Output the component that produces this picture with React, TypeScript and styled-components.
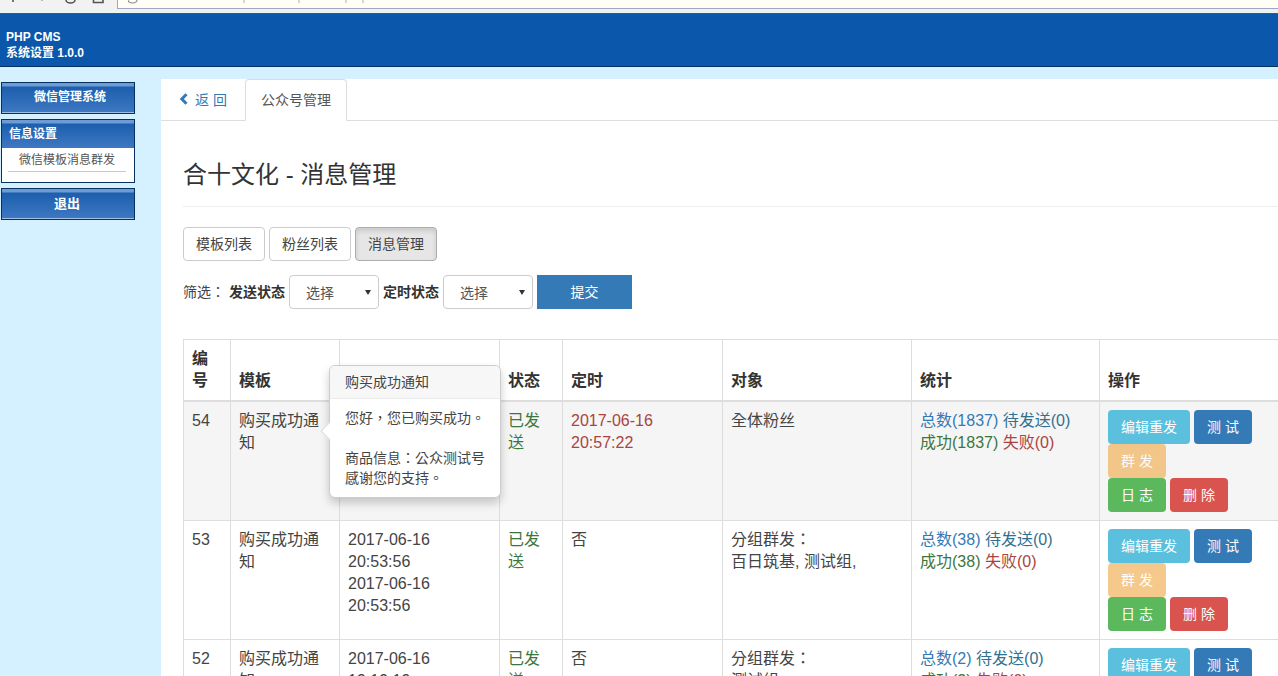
import { createGlobalStyle } from 'styled-components';
import styled from 'styled-components';

const GlobalStyle = createGlobalStyle`
  html, body {
    margin: 0;
    padding: 0;
    height: 100%;
    overflow: hidden;
    background: #d5f1ff;
    font-family: 'Liberation Sans', 'Noto Sans CJK SC', sans-serif;
    color: #333;
    font-size: 14px;
  }
  * { box-sizing: border-box; }
`;

type RowType = {
  id: number;
  timed: 'no' | string[];
  target: string[];
  total: number;
  success: number;
  fail: number;
  wait: number;
  times: string[];
};

const rows: RowType[] = [
  {
    id: 54,
    timed: ['2017-06-16', '20:57:22'],
    target: ['全体粉丝'],
    total: 1837,
    success: 1837,
    fail: 0,
    wait: 0,
    times: [],
  },
  {
    id: 53,
    timed: 'no',
    target: ['分组群发：', '百日筑基, 测试组,'],
    total: 38,
    success: 38,
    fail: 0,
    wait: 0,
    times: ['2017-06-16', '20:53:56', '2017-06-16', '20:53:56'],
  },
  {
    id: 52,
    timed: 'no',
    target: ['分组群发：', '测试组,'],
    total: 2,
    success: 2,
    fail: 0,
    wait: 0,
    times: ['2017-06-16', '19:19:19'],
  },
];

const App = () => {
  return (
    <>
      <GlobalStyle />
      <Chrome>
        <ChromeIcons>
          <svg width="117" height="8" viewBox="0 0 117 8" fill="none" stroke="#555" strokeWidth="1.6">
            <path d="M13 0 V2" />
            <path d="M42 0 V1" stroke="#aaa" />
            <path d="M66 0 A4.5 3 0 0 0 75 0" />
            <path d="M93.5 0 V2.5 H103 V0" />
          </svg>
        </ChromeIcons>
        <UrlBox>
          <svg width="260" height="8" viewBox="0 0 260 8" fill="none" stroke="#888" strokeWidth="1.2">
            <path d="M0 0 A4.5 3 0 0 0 9 0" />
            <path d="M116 0 V3 M171 0 V3 M218 0 V3 M235 0 V3" stroke="#bbb" />
          </svg>
        </UrlBox>
      </Chrome>
      <Header>
        <HeaderLine>PHP CMS</HeaderLine>
        <HeaderLine>系统设置 1.0.0</HeaderLine>
      </Header>
      <Body>
        <Sidebar>
          <SideBlock>
            <SideTitle $center $indent={4}>微信管理系统</SideTitle>
          </SideBlock>
          <SideBlock>
            <SideTitle>信息设置</SideTitle>
            <SideList>
              <SideItem>微信模板消息群发</SideItem>
            </SideList>
          </SideBlock>
          <SideBlock>
            <SideTitle $center $big>退出</SideTitle>
          </SideBlock>
        </Sidebar>
        <Main>
          <Tabs>
            <BackTab>
              <svg width="10" height="12" viewBox="0 0 10 12">
                <path d="M7.5 1.2 L2.8 6 L7.5 10.8" fill="none" stroke="#337ab7" strokeWidth="3" />
              </svg>
              返 回
            </BackTab>
            <ActiveTab>公众号管理</ActiveTab>
          </Tabs>
          <Content>
            <PageTitle>合十文化 - 消息管理</PageTitle>
            <ButtonRow>
              <NavButton>模板列表</NavButton>
              <NavButton>粉丝列表</NavButton>
              <NavButton $active>消息管理</NavButton>
            </ButtonRow>
            <FilterRow>
              <FilterLabel>筛选：</FilterLabel>
              <FilterName>发送状态</FilterName>
              <Select>选择</Select>
              <FilterName>定时状态</FilterName>
              <Select>选择</Select>
              <Submit>提交</Submit>
            </FilterRow>
            <Table>
              <colgroup>
                <col width="47" />
                <col width="109" />
                <col width="160" />
                <col width="63" />
                <col width="160" />
                <col width="189" />
                <col width="188" />
                <col width="200" />
              </colgroup>
              <thead>
                <tr>
                  <Th>编号</Th>
                  <Th>模板</Th>
                  <Th />
                  <Th>状态</Th>
                  <Th>定时</Th>
                  <Th>对象</Th>
                  <Th>统计</Th>
                  <Th>操作</Th>
                </tr>
              </thead>
              <tbody>
                {rows.map((row, i) => (
                  <Tr key={row.id} $striped={i === 0}>
                    <Td>{row.id}</Td>
                    <Td>购买成功通知</Td>
                    <Td>
                      {row.times.map((t, j) => (
                        <div key={j}>{t}</div>
                      ))}
                    </Td>
                    <Td>
                      <Text $color="#3c763d">已发送</Text>
                    </Td>
                    <Td>
                      {row.timed === 'no' ? (
                        '否'
                      ) : (
                        <Text $color="#a94442">
                          {row.timed[0]}
                          <br />
                          {row.timed[1]}
                        </Text>
                      )}
                    </Td>
                    <Td>
                      {row.target.map((t) => (
                        <Target key={t}>{t}</Target>
                      ))}
                    </Td>
                    <Td>
                      <Text $color="#337ab7">总数({row.total})</Text>{' '}
                      <Text $color="#31708f">待发送({row.wait})</Text>
                      <br />
                      <Text $color="#3c763d">成功({row.success})</Text>{' '}
                      <Text $color="#a94442">失败({row.fail})</Text>
                    </Td>
                    <Td>
                      <Actions>
                        <Action $bg="#5bc0de" $w={82}>编辑重发</Action>
                        <Action $bg="#337ab7" $w={58}>测 试</Action>
                        <Action $bg="#f0ad4e" $w={58} $faded>群 发</Action>
                        <Break />
                        <Action $bg="#5cb85c" $w={58}>日 志</Action>
                        <Action $bg="#d9534f" $w={58}>删 除</Action>
                      </Actions>
                    </Td>
                  </Tr>
                ))}
              </tbody>
            </Table>
            <Popover>
              <PopoverTitle>购买成功通知</PopoverTitle>
              <PopoverBody>
                <div>您好，您已购买成功。</div>
                <PopoverGap />
                <div>商品信息：公众测试号</div>
                <div>感谢您的支持。</div>
              </PopoverBody>
              <PopoverArrow />
            </Popover>
          </Content>
        </Main>
      </Body>
    </>
  );
};

const Chrome = styled.div`
  height: 13px;
  background: #eaf5ef;
  display: flex;
  align-items: flex-start;
`;

const ChromeIcons = styled.div`
  width: 117px;
  height: 9px;
  flex: none;
  background: #f2f2f2;
  display: flex;
`;

const UrlBox = styled.div`
  flex: 1;
  height: 9px;
  background: #fffff6;
  border-left: 1px solid #a9a0c8;
  border-bottom: 1px solid #a9a0c8;
  padding-left: 10px;
  display: flex;
`;

const Header = styled.div`
  height: 54px;
  background: #0b57ab;
  border-top: 1px solid #2a5aa0;
  border-bottom: 1px solid #06305f;
  padding-top: 15px;
  padding-left: 6px;
`;

const HeaderLine = styled.div`
  color: #fff;
  font-size: 12px;
  font-weight: bold;
  line-height: 16px;
`;

const Body = styled.div`
  display: flex;
  height: 609px;
`;

const Sidebar = styled.div`
  width: 161px;
  flex: none;
  padding: 15px 26px 0 1px;
  display: flex;
  flex-direction: column;
  gap: 5px;
`;

const SideBlock = styled.div`
  border: 1px solid #06305f;
  background: #fff;
`;

const SideTitle = styled.div<{ $center?: boolean; $indent?: number; $big?: boolean }>`
  height: ${(p) => (p.$center ? '30px' : '28px')};
  line-height: 29px;
  background: linear-gradient(#6f9bd4 0, #6f9bd4 3px, #1c5fae 4px, #3f78c2 100%);
  box-shadow: ${(p) => (p.$center ? 'inset 0 -1px 0 #9fc0e6' : 'none')};
  color: #fff;
  font-size: ${(p) => (p.$big ? '13px' : '12px')};
  font-weight: bold;
  text-align: ${(p) => (p.$center ? 'center' : 'left')};
  padding-left: ${(p) => (p.$center ? `${p.$indent ?? 0}px` : '7px')};
  padding-right: ${(p) => (p.$big ? '2px' : '0')};
`;

const SideList = styled.div`
  padding: 0 8px 10px 6px;
`;

const SideItem = styled.div`
  height: 24px;
  line-height: 25px;
  font-size: 12px;
  color: #555;
  text-align: center;
  border-bottom: 1px solid #c8c8d0;
`;

const Main = styled.div`
  flex: 1;
  min-width: 0;
  margin-top: 12px;
  background: #fff;
`;

const Tabs = styled.div`
  height: 42px;
  border-bottom: 1px solid #ddd;
  display: flex;
`;

const BackTab = styled.div`
  width: 84px;
  height: 41px;
  padding-bottom: 2px;
  color: #337ab7;
  font-size: 14px;
  display: flex;
  align-items: center;
  justify-content: center;
  gap: 6px;
`;

const ActiveTab = styled.div`
  width: 102px;
  height: 42px;
  padding-bottom: 2px;
  border: 1px solid #ddd;
  border-bottom-color: #fff;
  border-radius: 4px 4px 0 0;
  font-size: 14px;
  color: #555;
  display: flex;
  align-items: center;
  justify-content: center;
`;

const Content = styled.div`
  position: relative;
  padding: 37px 0 0 22px;
  width: 1200px;
`;

const PageTitle = styled.h1`
  margin: 0;
  height: 49px;
  border-bottom: 1px solid #eee;
  font-size: 24px;
  font-weight: 400;
  line-height: 33px;
  color: #333;
`;

const ButtonRow = styled.div`
  margin-top: 20px;
  display: flex;
  gap: 4px;
`;

const NavButton = styled.div<{ $active?: boolean }>`
  width: 82px;
  height: 34px;
  line-height: 32px;
  text-align: center;
  font-size: 14px;
  color: #444;
  border: 1px solid ${(p) => (p.$active ? '#adadad' : '#ccc')};
  border-radius: 4px;
  background: ${(p) => (p.$active ? '#e6e6e6' : '#fff')};
  box-shadow: ${(p) => (p.$active ? 'inset 0 3px 5px rgba(0, 0, 0, 0.125)' : 'none')};
`;

const FilterRow = styled.div`
  margin-top: 14px;
  display: flex;
  align-items: center;
  height: 34px;
  font-size: 14px;
`;

const FilterLabel = styled.span`
  margin-right: 4px;
  color: #444;
  margin-top: -2px;
  font-family: 'Liberation Sans', 'Noto Sans CJK TC', sans-serif;
`;

const FilterName = styled.span`
  font-weight: bold;
  margin-right: 4px;
  margin-top: -2px;
`;

const Select = styled.div`
  position: relative;
  width: 90px;
  height: 34px;
  line-height: 35px;
  border: 1px solid #ccc;
  border-radius: 4px;
  padding-left: 16px;
  font-size: 14px;
  color: #555;
  margin-right: 4px;
  &::after {
    content: '';
    position: absolute;
    right: 7px;
    top: 14px;
    border-left: 3px solid transparent;
    border-right: 3px solid transparent;
    border-top: 5px solid #333;
  }
`;

const Submit = styled.div`
  width: 95px;
  height: 34px;
  line-height: 34px;
  background: #337ab7;
  color: #fff;
  text-align: center;
  font-size: 14px;
`;

const Table = styled.table`
  margin-top: 30px;
  width: 1117px;
  table-layout: fixed;
  border-collapse: collapse;
  font-size: 16px;
  line-height: 22px;
`;

const Th = styled.th`
  padding: 8px;
  border: 1px solid #ddd;
  border-bottom-width: 2px;
  text-align: left;
  vertical-align: bottom;
  font-weight: bold;
`;

const Tr = styled.tr<{ $striped?: boolean }>`
  background: ${(p) => (p.$striped ? '#f5f5f5' : '#fff')};
`;

const Td = styled.td`
  padding: 8px;
  border: 1px solid #ddd;
  vertical-align: top;
  color: #444;
`;

const Target = styled.div`
  font-family: 'Liberation Sans', 'Noto Sans CJK TC', sans-serif;
`;

const Text = styled.span<{ $color: string }>`
  color: ${(p) => p.$color};
`;

const Actions = styled.div`
  display: flex;
  flex-wrap: wrap;
  column-gap: 4px;
`;

const Break = styled.div`
  flex-basis: 100%;
  height: 0;
`;

const Action = styled.div<{ $bg: string; $w: number; $faded?: boolean }>`
  width: ${(p) => p.$w}px;
  height: 34px;
  line-height: 34px;
  border-radius: 4px;
  text-align: center;
  font-size: 14px;
  color: #fff;
  background: ${(p) => p.$bg};
  opacity: ${(p) => (p.$faded ? 0.65 : 1)};
`;

const Popover = styled.div`
  position: absolute;
  left: 168px;
  top: 244px;
  width: 172px;
  background: #fff;
  border: 1px solid #ccc;
  border-radius: 6px;
  box-shadow: 0 5px 10px rgba(0, 0, 0, 0.2);
  font-size: 14px;
  line-height: 20px;
  color: #444;
  z-index: 2;
`;

const PopoverTitle = styled.div`
  height: 33px;
  line-height: 32px;
  padding-left: 15px;
  background: #f7f7f7;
  border-bottom: 1px solid #ebebeb;
  border-radius: 5px 5px 0 0;
`;

const PopoverBody = styled.div`
  padding: 9px 10px 9px 15px;
  white-space: nowrap;
  font-family: 'Liberation Sans', 'Noto Sans CJK TC', sans-serif;
`;

const PopoverGap = styled.div`
  height: 20px;
`;

const PopoverArrow = styled.div`
  position: absolute;
  left: -7px;
  top: 59px;
  width: 12px;
  height: 12px;
  background: #fff;
  transform: rotate(45deg);
  border-left: 1px solid #ddd;
  border-bottom: 1px solid #ddd;
`;

export default App;
